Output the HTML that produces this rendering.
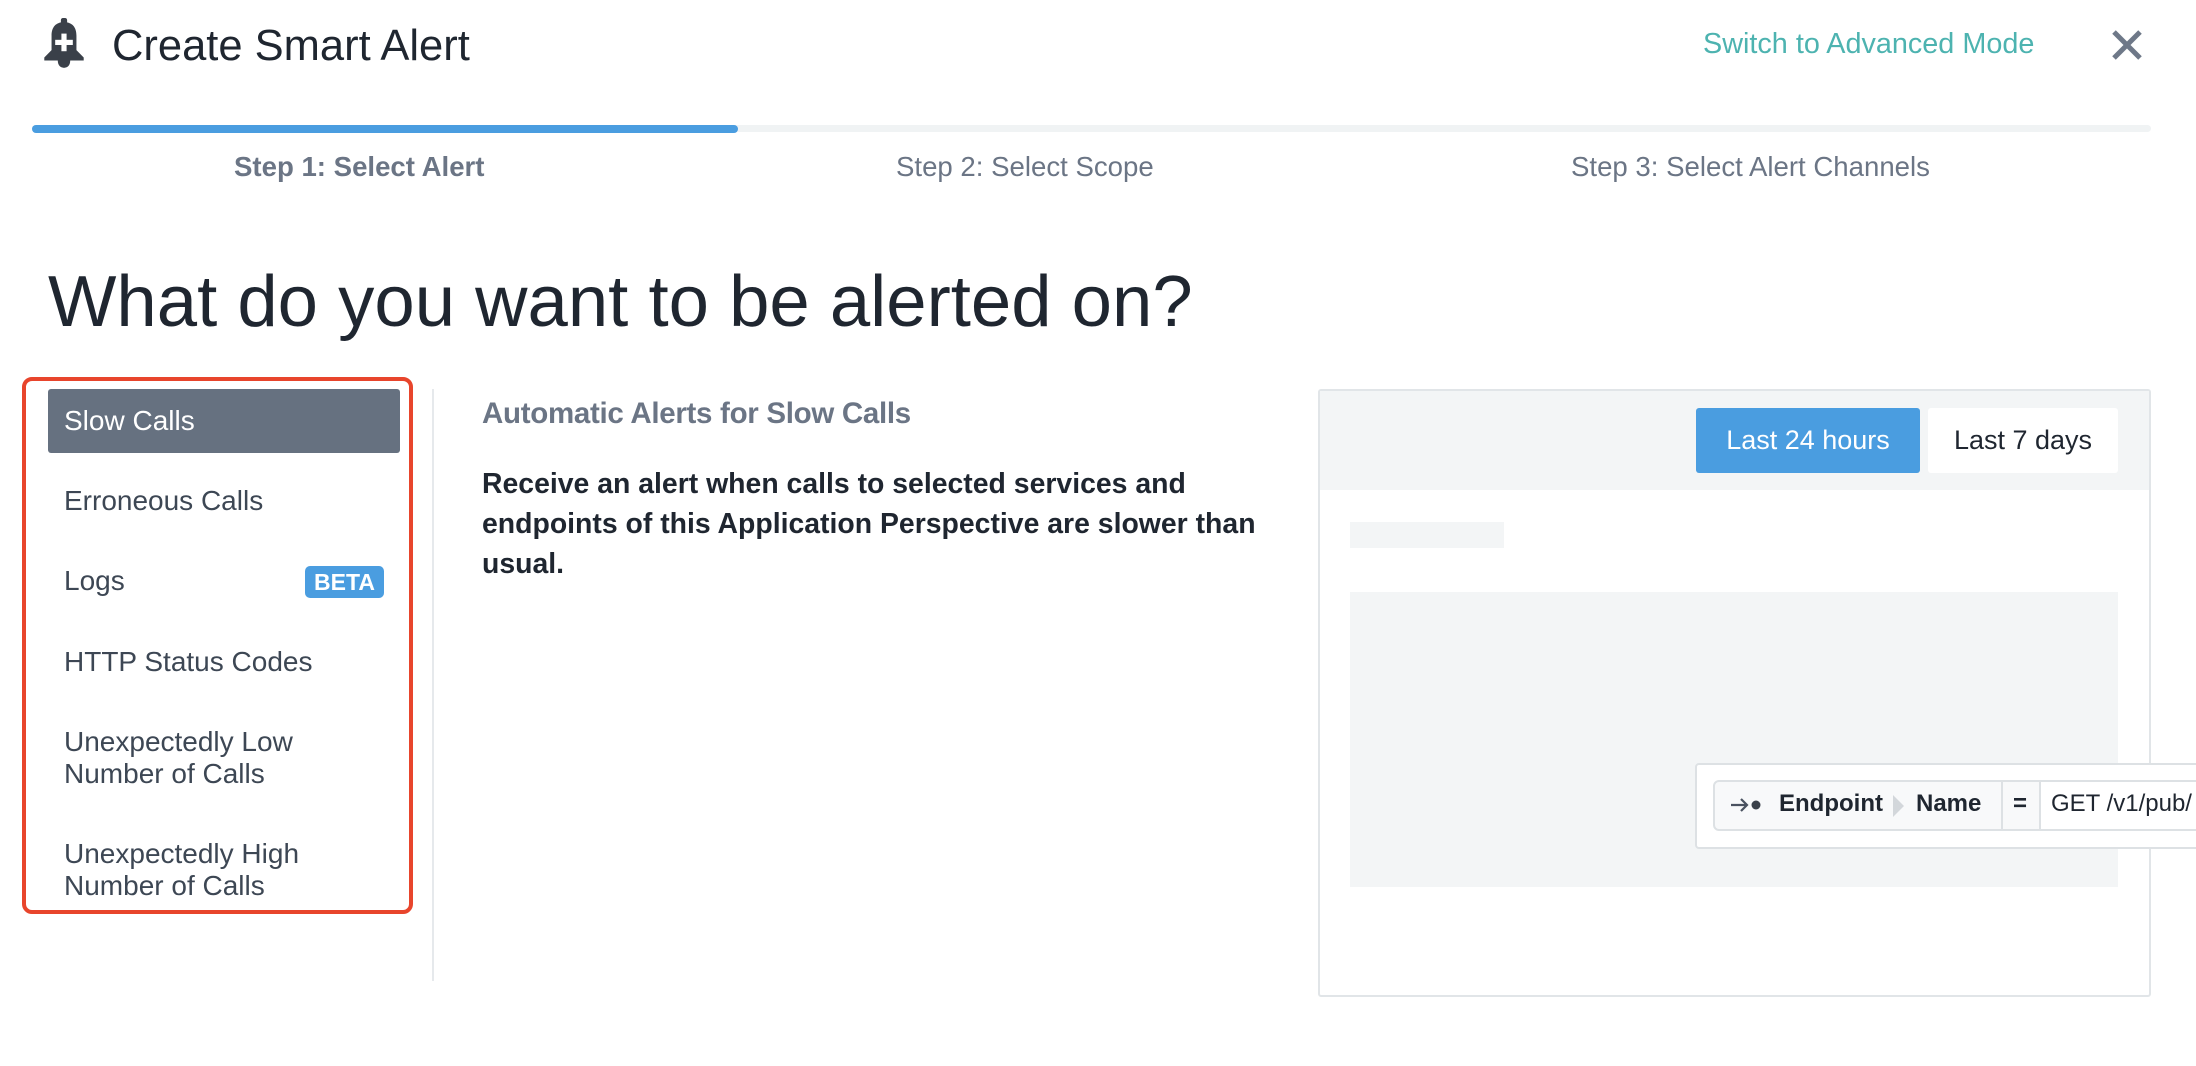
<!DOCTYPE html>
<html><head><meta charset="utf-8"><style>
*{box-sizing:border-box;margin:0;padding:0}
body{width:2196px;height:1066px;background:#fff;font-family:"Liberation Sans",Arial,sans-serif;position:relative;overflow:hidden;color:#1f2630}
.a{position:absolute;white-space:nowrap}
.item{position:absolute;left:64px;font-size:28px;color:#3d4754;line-height:32px}
</style></head><body>
<svg class="a" style="left:40px;top:17px" width="48" height="56" viewBox="0 0 44 54">
<rect x="19" y="1" width="6" height="6" rx="2" fill="#3a4049"/>
<path d="M22 5c-8 0-12 5-12 13v14l-7 7v3h38v-3l-7-7V18c0-8-4-13-12-13z" fill="#3a4049"/>
<path d="M16 42h12c0 5-3 7-6 7s-6-2-6-7z" fill="#3a4049"/>
<rect x="19.5" y="16" width="5" height="17" fill="#fff"/><rect x="13.5" y="22" width="17" height="5" fill="#fff"/>
</svg>
<div class="a" style="left:112px;top:22px;font-size:43.5px;color:#1f2630">Create Smart Alert</div>
<div class="a" style="left:1703px;top:28px;font-size:28.8px;color:#4db3b0">Switch to Advanced Mode</div>
<svg class="a" style="left:2111px;top:29px" width="32" height="32" viewBox="0 0 32 32"><path d="M3 3L29 29M29 3L3 29" stroke="#6e7888" stroke-width="5"/></svg>
<div class="a" style="left:32px;top:125px;width:2119px;height:7px;background:#f0f3f4;border-radius:4px"></div>
<div class="a" style="left:32px;top:125px;width:706px;height:8px;background:#4a9de0;border-radius:4px"></div>
<div class="a" style="left:234px;top:151px;font-size:27.6px;color:#6b7585;font-weight:bold">Step 1: Select Alert</div>
<div class="a" style="left:896px;top:151px;font-size:27.6px;color:#6b7585">Step 2: Select Scope</div>
<div class="a" style="left:1571px;top:151px;font-size:27.6px;color:#6b7585">Step 3: Select Alert Channels</div>
<div class="a" style="left:48px;top:260px;font-size:72.5px;color:#1f2630">What do you want to be alerted on?</div>
<div class="a" style="left:22px;top:377px;width:391px;height:537px;border:4px solid #e8452c;border-radius:10px"></div>
<div class="a" style="left:48px;top:389px;width:352px;height:64px;background:#667180;border-radius:3px"></div>
<div class="item" style="top:405px;color:#fff">Slow Calls</div>
<div class="item" style="top:485px">Erroneous Calls</div>
<div class="item" style="top:565px">Logs</div>
<div class="a" style="left:305px;top:566px;width:79px;height:32px;background:#4a9de0;border-radius:5px;color:#fff;font-weight:bold;font-size:23px;text-align:center;line-height:32px">BETA</div>
<div class="item" style="top:646px">HTTP Status Codes</div>
<div class="item" style="top:726px">Unexpectedly Low<br>Number of Calls</div>
<div class="item" style="top:838px">Unexpectedly High<br>Number of Calls</div>
<div class="a" style="left:432px;top:389px;width:2px;height:592px;background:#e6e9ec"></div>
<div class="a" style="left:482px;top:397px;font-size:29.5px;color:#6b7585;font-weight:bold;letter-spacing:-0.3px">Automatic Alerts for Slow Calls</div>
<div class="a" style="left:482px;top:464px;font-size:28.4px;font-weight:bold;color:#1f2630;line-height:40px">Receive an alert when calls to selected services and<br>endpoints of this Application Perspective are slower than<br>usual.</div>
<div class="a" style="left:1318px;top:389px;width:833px;height:608px;border:2px solid #e1e5e8;border-radius:3px"></div>
<div class="a" style="left:1320px;top:391px;width:829px;height:99px;background:#f3f5f6"></div>
<div class="a" style="left:1696px;top:408px;width:224px;height:65px;background:#4a9de0;border-radius:3px;color:#fff;font-size:27px;text-align:center;line-height:65px">Last 24 hours</div>
<div class="a" style="left:1928px;top:408px;width:190px;height:65px;background:#fff;border-radius:3px;color:#1f2630;font-size:27px;text-align:center;line-height:65px">Last 7 days</div>
<div class="a" style="left:1350px;top:522px;width:154px;height:26px;background:#f3f5f6"></div>
<div class="a" style="left:1350px;top:592px;width:768px;height:295px;background:#f3f5f6"></div>
<div class="a" style="left:1695px;top:763px;width:520px;height:86px;background:#fff;border:2px solid #dde1e4;border-radius:4px"></div>
<div class="a" style="left:1713px;top:780px;width:500px;height:51px;background:#f8f9fa;border:2px solid #dde1e4;border-radius:6px"></div>
<div class="a" style="left:2039px;top:782px;width:160px;height:47px;background:#fff"></div>
<div class="a" style="left:2001px;top:782px;width:2px;height:47px;background:#dde1e4"></div>
<div class="a" style="left:2039px;top:782px;width:2px;height:47px;background:#dde1e4"></div>
<svg class="a" style="left:1729px;top:795px" width="34" height="20" viewBox="0 0 34 20"><path d="M2 10h16M12 4l6 6-6 6" stroke="#4a5260" stroke-width="2.2" fill="none"/><circle cx="27" cy="10" r="4.5" fill="#3a4049"/></svg>
<div class="a" style="left:1779px;top:790px;font-size:24px;font-weight:bold;color:#1f2630">Endpoint</div>
<svg class="a" style="left:1893px;top:795px" width="12" height="22"><path d="M0 0L11 11L0 22z" fill="#d3d7db"/></svg>
<div class="a" style="left:1916px;top:790px;font-size:24px;font-weight:bold;color:#1f2630">Name</div>
<div class="a" style="left:2013px;top:790px;font-size:24px;font-weight:bold;color:#1f2630">=</div>
<div class="a" style="left:2051px;top:790px;font-size:24px;color:#1f2630">GET /v1/pub/</div>
</body></html>
